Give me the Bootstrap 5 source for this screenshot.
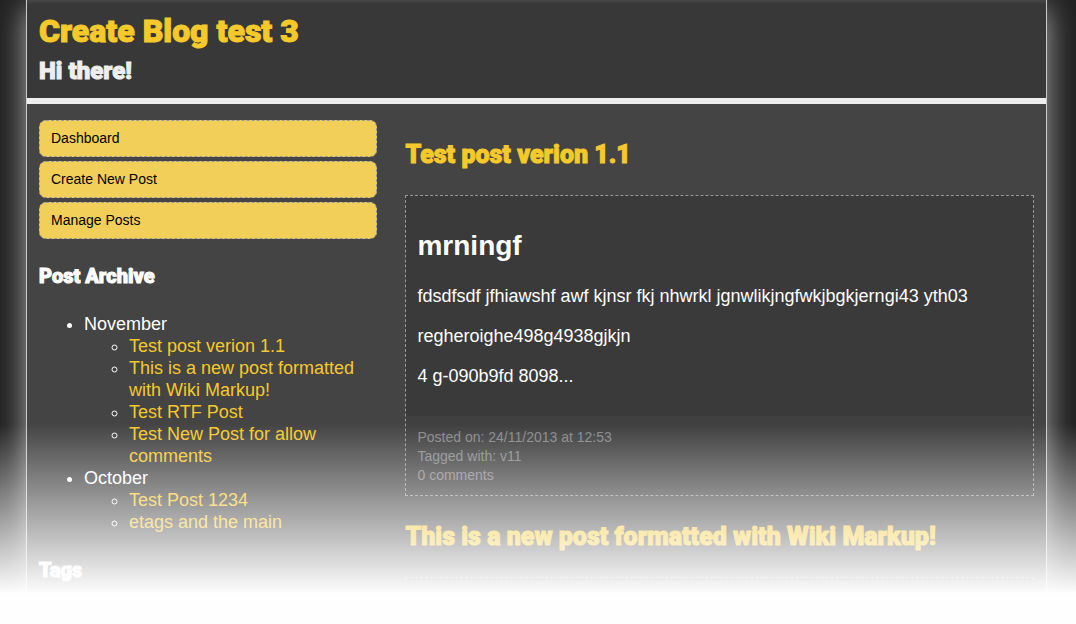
<!DOCTYPE html>
<html lang="en">
<head>
<meta charset="utf-8">
<meta name="viewport" content="width=device-width, initial-scale=1">
<title>Create Blog test 3</title>
<link href="https://cdn.jsdelivr.net/npm/bootstrap@5.3.0/dist/css/bootstrap.min.css" rel="stylesheet">
<style>
body { background: #222; color: #fff; font: 18px/22px "Liberation Sans", Arial, sans-serif; padding: 0 29px 0 26px; }
h1, h2, .tagline, .side-title { font-family: Impact, Roboto, "Liberation Sans", sans-serif; font-weight: 900; -webkit-text-stroke: 1px currentColor; }
a { color: #f5c92a; text-decoration: none; }
a:hover { text-decoration: underline; }
.blog { background: #444; border: solid #ccc; border-width: 0 1px; box-shadow: 0 8px 28px #aaa; }
.blog-head { background: linear-gradient(#484848, #383838 4px); border-bottom: 6px solid #eee; padding: 8px 12px 12px; }
h1 { font-size: 32px; line-height: 46px; }
.tagline { font-size: 24px; line-height: 34px; margin-bottom: -2px; color: #eee; }
.blog-body { padding: 16px 12px 0; gap: 28px; }
.side { flex: 35 1 0; }
.posts { flex: 65 1 0; }
.side-menu { gap: 4px; }
.side-menu a { background: #f2cf58; color: #000; border: 1px dashed #999; border-radius: 7px; padding: 7px 11px; font-size: 14px; line-height: 21px; }
.side-title { font-size: 20px; line-height: 30px; margin: 22px 0; }
.archive, .archive ul { padding-left: 45px; margin: 0; }
h2 { font-size: 25px; line-height: 38px; margin: 16px 0 21px; }
.post { background: #3a3a3a; border: 1px dashed #999; margin-bottom: 22px; }
.post-text { padding: 32px 11px 11px; }
.post-text h3 { font-size: 28px; line-height: 36px; font-weight: 700; margin-bottom: 21px; }
.post-text p { margin-bottom: 18px; }
.post-info { background: #404040; color: #888; font-size: 14px; line-height: 19px; padding: 12px 11px 10px; }
.fade-out { height: 200px; background: linear-gradient(transparent, #fefefe 85%); pointer-events: none; }
</style>
</head>
<body class="vh-100 overflow-hidden position-relative">
<div class="blog h-100">
  <header class="blog-head">
    <h1 class="m-0"><a href="#">Create Blog test 3</a></h1>
    <p class="tagline">Hi there!</p>
  </header>
  <div class="blog-body d-flex align-items-start">
    <aside class="side">
      <nav class="side-menu d-flex flex-column">
        <a href="#">Dashboard</a>
        <a href="#">Create New Post</a>
        <a href="#">Manage Posts</a>
      </nav>
      <h3 class="side-title">Post Archive</h3>
      <ul class="archive">
        <li>November
          <ul>
            <li><a href="#">Test post verion 1.1</a></li>
            <li><a href="#">This is a new post formatted with Wiki Markup!</a></li>
            <li><a href="#">Test RTF Post</a></li>
            <li><a href="#">Test New Post for allow comments</a></li>
          </ul>
        </li>
        <li>October
          <ul>
            <li><a href="#">Test Post 1234</a></li>
            <li><a href="#">etags and the main</a></li>
          </ul>
        </li>
      </ul>
      <h3 class="side-title mb-0">Tags</h3>
    </aside>
    <main class="posts">
      <h2><a href="#">Test post verion 1.1</a></h2>
      <article class="post">
        <div class="post-text">
          <h3>mrningf</h3>
          <p>fdsdfsdf jfhiawshf awf kjnsr fkj nhwrkl jgnwlikjngfwkjbgkjerngi43 yth03</p>
          <p>regheroighe498g4938gjkjn</p>
          <p>4 g-090b9fd 8098...</p>
        </div>
        <div class="post-info">
          <div>Posted on: 24/11/2013 at 12:53</div>
          <div>Tagged with: v11</div>
          <div>0 comments</div>
        </div>
      </article>
      <h2><a href="#">This is a new post formatted with Wiki Markup!</a></h2>
      <article class="post mb-0"><div class="post-text pb-0"></div></article>
    </main>
  </div>
</div>
<div class="fade-out position-absolute bottom-0 start-0 end-0"></div>
<script src="https://cdn.jsdelivr.net/npm/bootstrap@5.3.0/dist/js/bootstrap.bundle.min.js"></script>
</body>
</html>
